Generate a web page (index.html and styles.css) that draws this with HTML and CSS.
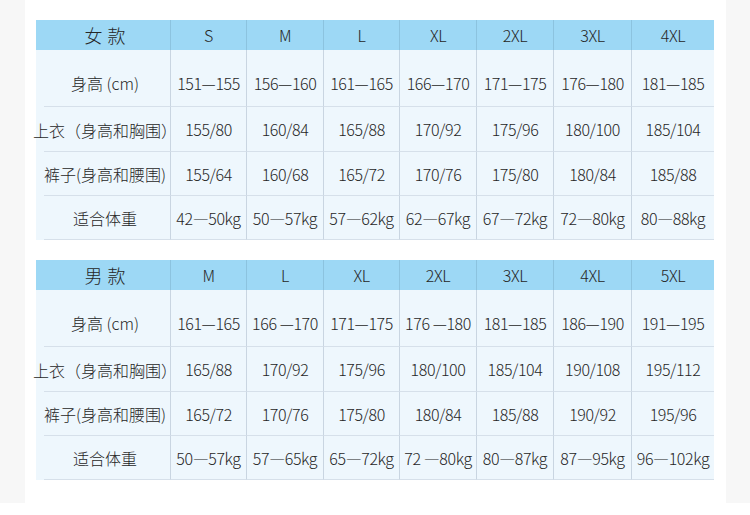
FILE: index.html
```html
<!DOCTYPE html>
<html lang="zh-CN">
<head>
<meta charset="utf-8">
<link rel="stylesheet" href="styles.css">
</head>
<body>
<div class="page">
  <div class="side"></div>
  <main class="center">
    <section class="chart">
      <div class="row head">
        <div class="cell label title">女款</div>
        <div class="cell">S</div><div class="cell">M</div><div class="cell">L</div><div class="cell">XL</div><div class="cell">2XL</div><div class="cell">3XL</div><div class="cell">4XL</div>
      </div>
      <div class="row first">
        <div class="cell label">身高 (cm)</div>
        <div class="cell">151—155</div><div class="cell">156—160</div><div class="cell">161—165</div><div class="cell">166—170</div><div class="cell">171—175</div><div class="cell">176—180</div><div class="cell">181—185</div>
      </div>
      <div class="row second">
        <div class="cell label">上衣（身高和胸围）</div>
        <div class="cell">155/80</div><div class="cell">160/84</div><div class="cell">165/88</div><div class="cell">170/92</div><div class="cell">175/96</div><div class="cell">180/100</div><div class="cell">185/104</div>
      </div>
      <div class="row">
        <div class="cell label">裤子(身高和腰围)</div>
        <div class="cell">155/64</div><div class="cell">160/68</div><div class="cell">165/72</div><div class="cell">170/76</div><div class="cell">175/80</div><div class="cell">180/84</div><div class="cell">185/88</div>
      </div>
      <div class="row">
        <div class="cell label">适合体重</div>
        <div class="cell">42—50kg</div><div class="cell">50—57kg</div><div class="cell">57—62kg</div><div class="cell">62—67kg</div><div class="cell">67—72kg</div><div class="cell">72—80kg</div><div class="cell">80—88kg</div>
      </div>
    </section>
    <section class="chart">
      <div class="row head">
        <div class="cell label title">男款</div>
        <div class="cell">M</div><div class="cell">L</div><div class="cell">XL</div><div class="cell">2XL</div><div class="cell">3XL</div><div class="cell">4XL</div><div class="cell">5XL</div>
      </div>
      <div class="row first">
        <div class="cell label">身高 (cm)</div>
        <div class="cell">161—165</div><div class="cell">166 —170</div><div class="cell">171—175</div><div class="cell">176 —180</div><div class="cell">181—185</div><div class="cell">186—190</div><div class="cell">191—195</div>
      </div>
      <div class="row second">
        <div class="cell label">上衣（身高和胸围）</div>
        <div class="cell">165/88</div><div class="cell">170/92</div><div class="cell">175/96</div><div class="cell">180/100</div><div class="cell">185/104</div><div class="cell">190/108</div><div class="cell">195/112</div>
      </div>
      <div class="row">
        <div class="cell label">裤子(身高和腰围)</div>
        <div class="cell">165/72</div><div class="cell">170/76</div><div class="cell">175/80</div><div class="cell">180/84</div><div class="cell">185/88</div><div class="cell">190/92</div><div class="cell">195/96</div>
      </div>
      <div class="row">
        <div class="cell label">适合体重</div>
        <div class="cell">50—57kg</div><div class="cell">57—65kg</div><div class="cell">65—72kg</div><div class="cell">72 —80kg</div><div class="cell">80—87kg</div><div class="cell">87—95kg</div><div class="cell">96—102kg</div>
      </div>
    </section>
  </main>
  <div class="side"></div>
</div>
</body>
</html>
```
FILE: styles.css
```css
html, body {
  margin: 0;
  padding: 0;
  background: #ffffff;
}
body {
  font-family: "Noto Sans CJK SC", "Noto Sans", sans-serif;
  color: #262626;
}
.page {
  display: flex;
  height: 503px;
}
.side {
  width: 25px;
  background: #f7f7f7;
  flex: none;
}
.side:last-child {
  width: 24px;
}
.center {
  flex: 1;
  background: #ffffff;
  padding: 20px 0 0 11px;
  display: flex;
  flex-direction: column;
  gap: 20px;
}
.chart {
  width: 678px;
  background: #eef7fd;
}
.row {
  display: grid;
  grid-template-columns: 134px 76px 77px 76px 77px 77px 78px 83px;
  height: 44px;
}
.row.head {
  height: 30px;
  background: #9dd8f5;
}
.row.first {
  height: 57px;
}
.row.first .cell {
  padding-top: 9px;
}
.row.second {
  height: 45px;
}
.cell {
  display: flex;
  align-items: center;
  justify-content: center;
  font-size: 16px;
  font-weight: 300;
  letter-spacing: -0.4px;
  white-space: nowrap;
  border-left: 1px solid #c9d5e1;
  border-bottom: 1px solid #d6e0ea;
  box-sizing: border-box;
}
.cell.label {
  border-left: none;
  padding-left: 4px;
  letter-spacing: 0;
  border-bottom: none;
  background: linear-gradient(#d6e0ea, #d6e0ea) no-repeat 8px 100% / calc(100% - 8px) 1px;
}
.head .cell {
  border-bottom: none;
  border-left-color: #8cc3df;
}
.head .cell.label {
  background: none;
}
.title {
  font-size: 18px;
  letter-spacing: 5px !important;
  text-indent: 5px;
}
```
